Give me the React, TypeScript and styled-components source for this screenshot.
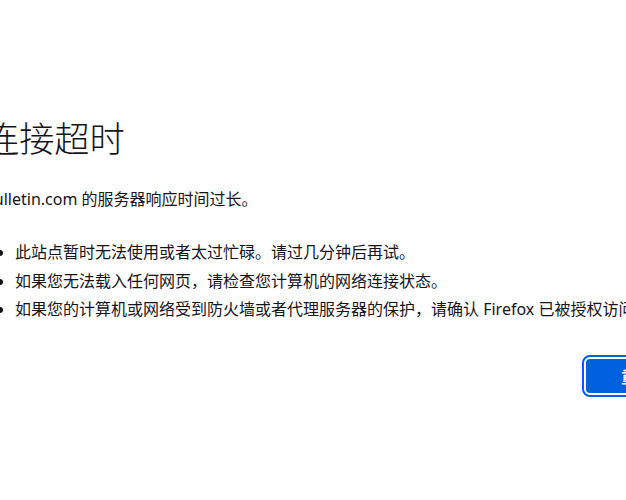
import React from "react";
import styled, { createGlobalStyle } from "styled-components";

const Global = createGlobalStyle`
  html, body {
    margin: 0;
    padding: 0;
    background: #ffffff;
    overflow: hidden;
  }
  body {
    width: 626px;
    height: 500px;
    font-family: "Noto Sans", "Noto Sans CJK SC", sans-serif;
    color: #15141a;
  }
`;

const Page = styled.main`
  display: flex;
  flex-direction: column;
  width: 704px;
  margin-left: -16px;
  padding-top: 116px;
  font-size: 16px;
`;

const Title = styled.h1`
  margin: 0;
  font-size: 35.2px;
  line-height: 42px;
  font-weight: 300;
  font-family: "Noto Sans CJK SC", sans-serif;
  white-space: nowrap;
`;

const Lead = styled.p`
  margin: 29px 0 0;
  line-height: 24px;
  white-space: nowrap;
`;

const List = styled.ul`
  margin: 29px 0 0;
  padding: 0 0 0 31px;
  display: flex;
  flex-direction: column;
  gap: 4.5px;
`;

const Item = styled.li`
  line-height: 24px;
  white-space: nowrap;
`;

const ButtonRow = styled.div`
  display: flex;
  justify-content: flex-end;
  margin-top: 38px;
`;

const PrimaryButton = styled.button`
  height: 34px;
  padding: 0 35px;
  border: none;
  border-radius: 4px;
  background: #0061e0;
  color: #ffffff;
  font-family: "Noto Sans CJK SC", sans-serif;
  font-size: 16px;
  font-weight: 600;
  outline: 2px solid #0061e0;
  outline-offset: 2px;
  white-space: nowrap;
`;

export default function App() {
  return (
    <>
      <Global />
      <Page>
        <Title>连接超时</Title>
        <Lead>bulletin.com 的服务器响应时间过长。</Lead>
        <List>
          <Item>此站点暂时无法使用或者太过忙碌。请过几分钟后再试。</Item>
          <Item>如果您无法载入任何网页，请检查您计算机的网络连接状态。</Item>
          <Item>
            如果您的计算机或网络受到防火墙或者代理服务器的保护，请确认 Firefox 已被授权访问网络。
          </Item>
        </List>
        <ButtonRow>
          <PrimaryButton>重试</PrimaryButton>
        </ButtonRow>
      </Page>
    </>
  );
}
